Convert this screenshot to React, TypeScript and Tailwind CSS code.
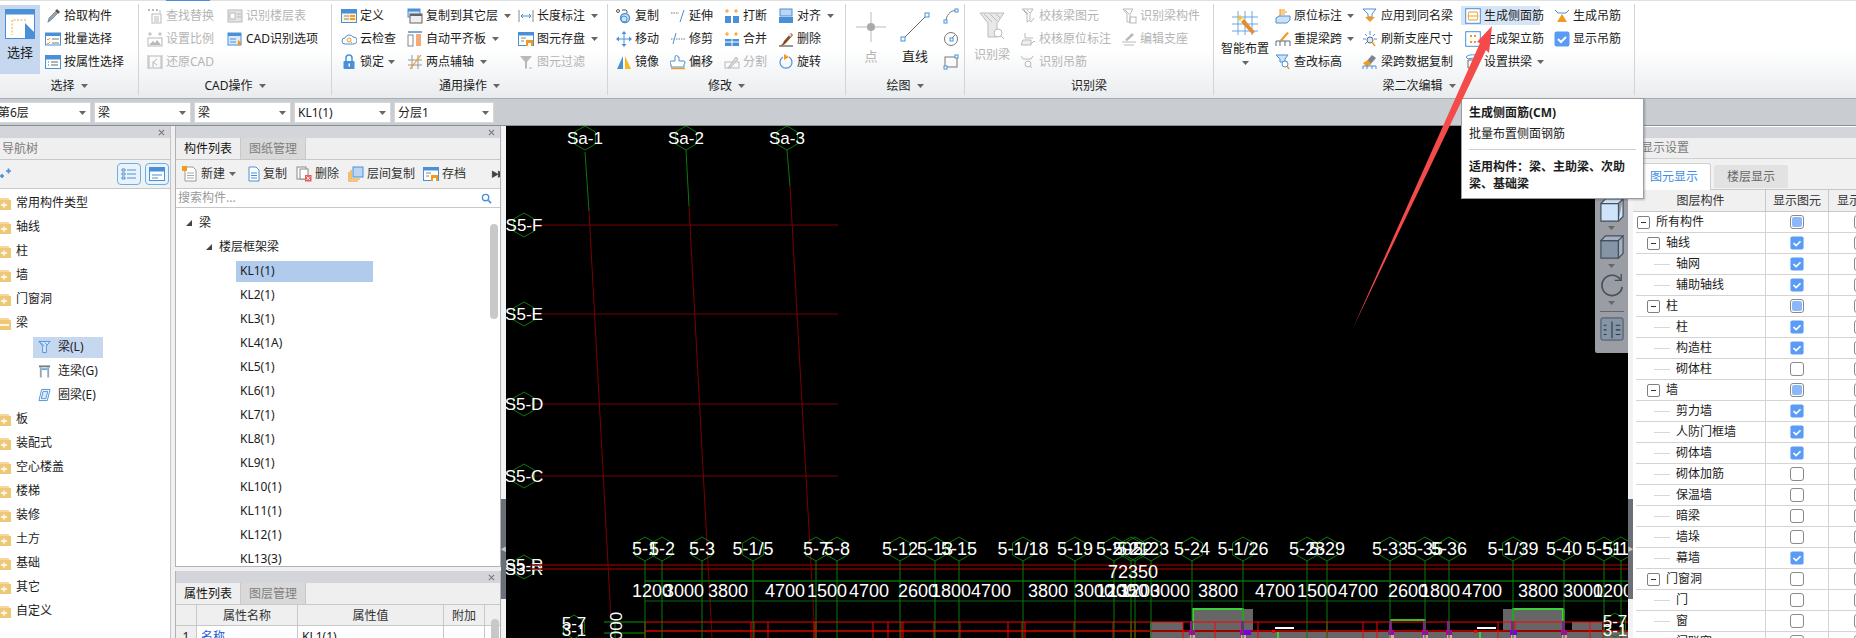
import React from "react";

const B = "#4a90d9";
const O = "#f39a1e";
const G = "#b9b9b9";
const K = "#5f6b78";

const icons: Record<string, React.ReactNode> = {
  pick: <><path d="M3 14l1-4 6-6 2 2-6 6z" fill="#9aa3ad" stroke="#666" strokeWidth=".6" /><path d="M10 3l2-2 3 3-2 2z" fill="#555" /><path d="M2 15l2-3 1 1z" fill={B} /></>,
  batch: <><rect x=".5" y="2" width="15" height="12" fill="#fff" stroke={B} /><rect x=".5" y="2" width="15" height="3" fill={B} /><path d="M2 8l1 1 2-2M2 12l1 1 2-2" stroke={O} fill="none" /><path d="M7 8h7M7 12h7" stroke="#777" /></>,
  attr: <><rect x=".5" y="1.5" width="15" height="13" fill="#fff" stroke={B} /><rect x=".5" y="1.5" width="15" height="4" fill={B} /><path d="M3 8h1M3 11h1M6 8h7M6 11h7" stroke="#666" /></>,
  find: <><path d="M1 2h2M5 2h2M9 2h2" stroke={G} strokeWidth="2" /><path d="M13 2v3" stroke={G} /><rect x="5" y="6" width="9" height="9" fill="none" stroke={G} /><path d="M7 9h5M7 11h5M7 13h5" stroke={G} /></>,
  scale: <><path d="M1 3h4M11 3h4M3 1v4M13 1v4" stroke={G} /><rect x="1" y="7" width="14" height="8" fill="none" stroke={G} /><path d="M2 14l4-4 2 2 2-3 4 5z" fill={G} /></>,
  restore: <><rect x="2" y="2" width="12" height="12" fill="none" stroke={G} /><path d="M10 5L6 8l4 3M6 8v5" stroke={G} fill="none" /><path d="M1 1v14M15 1v14" stroke={G} /></>,
  floor: <><rect x="1" y="2" width="14" height="12" fill="#e4e4e4" stroke={G} /><rect x="3" y="5" width="5" height="6" fill="#fff" stroke={G} /><path d="M10 6h4M10 9h4" stroke={G} /></>,
  cadopt: <><rect x="1" y="2" width="13" height="12" fill="#dbe9f8" stroke={B} /><rect x="1" y="2" width="13" height="3" fill={B} /><path d="M11 9l4 3-4 3z" fill={O} /><path d="M3 8h6M3 11h6" stroke={B} /></>,
  define: <><rect x=".5" y="1.5" width="15" height="13" fill="#fdf3dc" stroke={B} /><rect x=".5" y="1.5" width="15" height="4" fill={B} /><path d="M3 8h5M3 11h5" stroke="#888" /><rect x="9" y="7" width="5" height="2" fill={O} /><rect x="9" y="10" width="5" height="2" fill={O} /></>,
  cloud: <><path d="M4 13a3 3 0 010-6 4.500 4.500 0 018-1 3.500 3.500 0 011 7z" fill="#fff" stroke={B} /><circle cx="8" cy="9" r="2" fill="none" stroke={O} /><path d="M9.500 10.500l1.500 1.500" stroke={O} /></>,
  lock: <><rect x="2.500" y="7" width="11" height="8" rx="1" fill={B} /><path d="M5 7V4a3 3 0 016 0v3" fill="none" stroke={B} strokeWidth="1.500" /><rect x="7.500" y="9.500" width="1.500" height="3" fill="#fff" /></>,
  copyf: <><rect x="1" y="1" width="12" height="8" fill="#cfe1f5" stroke={B} /><rect x="1" y="1" width="12" height="2.500" fill={B} /><rect x="3" y="6" width="12" height="9" fill="#eee" stroke="#666" /><rect x="3" y="6" width="12" height="2" fill="#666" /></>,
  plate: <><path d="M1 1h14" stroke={B} strokeWidth="1.500" /><rect x="1" y="4" width="5" height="11" fill="#fff" stroke="#888" /><rect x="9" y="3" width="5" height="12" fill="#f6a878" /></>,
  twoaxis: <><path d="M5 1v14M11 1v14M1 6h14M1 11h14" stroke="#999" /><path d="M3 15L14 1" stroke={O} strokeWidth="1.200" /></>,
  dim: <><path d="M1 2v12M15 2v12" stroke="#888" /><path d="M3 8h10M3 8l2-2M3 8l2 2M13 8l-2-2M13 8l-2 2" stroke={B} fill="none" /></>,
  save: <><rect x=".5" y="1.500" width="15" height="13" fill="#fff" stroke={B} /><rect x=".5" y="1.500" width="15" height="3" fill={B} /><path d="M3 7h5M3 10h3" stroke="#888" /><rect x="8" y="9" width="7" height="6" fill={O} /><rect x="10" y="12" width="3" height="3" fill="#fff" /></>,
  filter: <><path d="M2 2h12L9 8v6l-2 1V8z" fill={G} /><path d="M11 14h3" stroke={G} /></>,
  copy: <><circle cx="2" cy="3" r="1.500" fill="none" stroke="#555" /><path d="M6 2h4l1 1v2" stroke="#555" fill="none" /><circle cx="9" cy="10" r="4.500" fill="#cfe1f5" stroke={B} strokeWidth="1.300" /><circle cx="8" cy="11" r="3" fill="none" stroke={B} /></>,
  move: <><path d="M8 1v14M1 8h14" stroke={B} /><path d="M8 0l2.500 3h-5zM8 16l2.500-3h-5zM0 8l3-2.500v5zM16 8l-3-2.500v5z" fill={B} /></>,
  mirror: <><path d="M7 2v13H1z" fill={B} /><path d="M9 2v13h6z" fill="#fbb917" /></>,
  extend: <><path d="M1 5h8" stroke="#777" strokeDasharray="1.500 1" /><path d="M10 14l4-12" stroke={B} /></>,
  trim: <><path d="M1 8h14" stroke="#777" strokeDasharray="1.500 1" /><path d="M3 13L6 2" stroke={B} /></>,
  offset: <><path d="M5 7V3a1.500 1.500 0 013 0h1v4h4a1.500 1.500 0 011 3v3H1v-3a1.500 1.500 0 011-3z" fill="#fff" stroke={B} /><path d="M1 14.500h14" stroke={O} strokeWidth="1.500" /></>,
  brk: <><path d="M3 1v4M1 3h4M12 1v4M10 3h4" stroke={O} /><rect x="1" y="8" width="6" height="7" fill={B} /><rect x="9" y="8" width="6" height="7" fill={B} /></>,
  merge: <><path d="M3 1v4M1 3h4M12 1v4M10 3h4" stroke={O} /><rect x="1" y="8" width="14" height="7" fill={B} /><path d="M8 8v7M1 11h14" stroke="#fff" /></>,
  split: <><rect x="1" y="8" width="14" height="6" fill="none" stroke={G} /><path d="M4 14l8-11 2 2-7 8z" fill="#ddd" stroke={G} /></>,
  align: <><rect x="2" y="1" width="12" height="7" fill="#bcd5f2" stroke={B} /><rect x="1" y="9" width="14" height="6" fill={B} /></>,
  del: <><path d="M1 14c3 1 4-2 5-4l7-8 2 2-7 8c-2 2-4 3-7 2z" fill="#8a4b20" /><path d="M10 4l2-2 2 2-2 2z" fill="#d9d9d9" /><path d="M1 15h14" stroke="#333" /></>,
  rotate: <><path d="M5 3a6 6 0 106 0" fill="none" stroke={B} strokeWidth="1.200" /><path d="M6 0l5 3-5 3z" fill={O} /></>,
  arc: <><path d="M3 14C3 7 7 3 13 2" fill="none" stroke="#777" /><rect x="1" y="12" width="3" height="3" fill="#fff" stroke={B} /><rect x="12" y="1" width="3" height="3" fill="#fff" stroke={B} /></>,
  circle: <><circle cx="8" cy="8" r="6.500" fill="none" stroke="#777" /><path d="M8 8l4-4" stroke="#777" /><rect x="7" y="7" width="3" height="3" fill="#fff" stroke={B} /></>,
  rect: <><rect x="2" y="3" width="12" height="10" fill="none" stroke="#777" /><rect x="1" y="12" width="3" height="3" fill="#fff" stroke={B} /><rect x="12" y="1" width="3" height="3" fill="#fff" stroke={B} /></>,
  chk: <><path d="M2 1h11l-3 5v6l-3 2V6z" fill="none" stroke={G} /><path d="M4 2l4 4M7 2l3 3" stroke={G} /><path d="M9 12l2 2 3-4" stroke={G} fill="none" /></>,
  chk2: <><path d="M1 14h10V9H3z" fill="#eee" stroke={G} /><path d="M5 2v5h8" stroke={G} fill="none" /><path d="M11 13l3-3 1 1" stroke={G} fill="none" /></>,
  hang: <><path d="M1 2l2 3h8l2-3" stroke={G} fill="none" /><circle cx="8" cy="10" r="3" fill="none" stroke={G} /><path d="M10 12l2 2" stroke={G} /></>,
  idc: <><path d="M2 1h10l-3 5v8H6V6z" fill="none" stroke={G} /><path d="M4 2l4 4" stroke={G} /><rect x="9" y="9" width="6" height="6" fill="none" stroke={G} /></>,
  editseat: <><path d="M1 11h14M3 14h10" stroke={G} /><path d="M4 9l7-7 2 2-7 6z" fill={G} /></>,
  orig: <><path d="M5 1v7M5 2h5M5 4h7M5 6h5" stroke={O} /><path d="M1 10l3-2h11v4l-3 3H1z" fill="#cfe1f5" stroke={B} /></>,
  span: <><path d="M5 9l7-8 2 1-7 8z" fill={O} /><path d="M1 10h14v5M1 10v5M5 10v5M10 10v5" stroke={K} fill="none" /></>,
  elev: <><path d="M1 1h12l-3 4v3H5V5z" fill="#cfe1f5" stroke={B} /><circle cx="10" cy="10" r="3" fill="#fff" stroke={B} /><path d="M12 12l2 3" stroke={O} strokeWidth="1.500" /></>,
  apply: <><path d="M1 1h13l-4 5v3H6V6z" fill="none" stroke={B} /><path d="M3 9h10l-5 5z" fill={O} /></>,
  refresh: <><path d="M8 0v4M3 3l2 2M13 3l-2 2M1 8h3M12 8h3M3 13l2-2" stroke={B} /><circle cx="8" cy="9" r="3" fill="#dbe9f8" stroke={K} /><path d="M10 11l3 4" stroke={O} strokeWidth="1.500" /></>,
  spancopy: <><path d="M4 8l6-7 4 3-6 7z" fill="#7a8591" /><path d="M1 9l5-3 3 4-4 3z" fill={O} /><path d="M1 15v-3h13v3M5 12v3M10 12v3" stroke={B} fill="none" /></>,
  side: <><rect x=".7" y=".7" width="14.600" height="14.600" fill="#fff" stroke={B} /><path d="M4 4h8M4 12h8M4 4c-1 2-1 6 0 8M12 4c1 2 1 6 0 8M4 8h8" stroke={O} fill="none" /></>,
  rack: <><rect x=".7" y=".7" width="14.600" height="14.600" fill="#fff" stroke={B} /><path d="M5 4h2v2H5zM9 4h2v2H9zM5 10h2v2H5zM9 10h2v2H9z" fill={O} /></>,
  arch: <><path d="M1 3c3-3 10-3 13 0l-2 2c-2-1-7-1-9 0z" fill="none" stroke={B} /><path d="M3 6h8v8H3z" fill="#fff" stroke={K} /><path d="M9 9l4 3-3 3z" fill={O} /></>,
  hanger: <><path d="M1 2l3 3h8l3-3" stroke={B} fill="none" /><path d="M8 6l5 8H3z" fill={O} /></>,
  checked: <><rect x=".5" y=".5" width="15" height="15" rx="2" fill="#5a9cf5" /><path d="M4 8l3 3 5-5" stroke="#fff" strokeWidth="2" fill="none" /></>,
  new: <><path d="M3 1h8l3 3v11H3z" fill="#fff" stroke="#999" /><path d="M5 7h7M5 9.500h7M5 12h7" stroke="#aaa" /><rect x="0" y="0" width="5" height="5" fill={O} /></>,
  tcopy: <><path d="M3 1h7l3 3v11H3z" fill="#fff" stroke={B} /><path d="M5 7h6M5 9.500h6M5 12h6" stroke={B} /></>,
  tdel: <><rect x="1" y="1" width="9" height="12" fill="#fff" stroke="#888" /><rect x="4" y="3" width="8" height="10" fill="#fff" stroke="#888" /><rect x="9" y="9" width="6.500" height="6.500" fill="#e35d5d" /><path d="M10.500 10.500l3.500 3.500M14 10.500L10.500 14" stroke="#fff" /></>,
  layer: <><path d="M1 6v9h9" fill="none" stroke={O} strokeWidth="1.200" /><path d="M3 4v9h9" fill="none" stroke={O} strokeWidth="1.200" /><rect x="5" y="1" width="10" height="10" fill="#bcd5f2" stroke={B} /></>,
};

const Ic = ({ n, c = "w-[16px] h-[16px]" }: { n: string; c?: string }) => (
  <svg viewBox="0 0 16 16" className={`${c} shrink-0`}>{icons[n]}</svg>
);

const Caret = () => (
  <svg viewBox="0 0 7 4" className="w-[7px] h-[4px] shrink-0"><path d="M0 0h7L3.500 4z" fill="#666" /></svg>
);

type BtnP = { i: string; t: string; off?: boolean; car?: string; hi?: boolean };
const Btn = ({ i, t, off, car, hi }: BtnP) => (
  <div className={`h-[23px] flex items-center whitespace-nowrap ${off ? "text-[#b4b4b4]" : "text-[#1c1c1c]"} ${hi ? "bg-[#d6e5f6] -ml-[4px] pl-[4px] mr-[14px] my-[2px] !h-[19px]" : ""}`}>
    <Ic n={i} />
    <span className="ml-[3px]">{t}</span>
    {car ? <span className={`flex ${car}`}><Caret /></span> : null}
  </div>
);

const Col = ({ w, items }: { w: string; items: BtnP[] }) => (
  <div className={`${w} shrink-0 flex flex-col`}>{items.map((x) => <Btn key={x.t} {...x} />)}</div>
);

const Group = ({ w, label, noCaret, lw, children }: { w: string; label: string; noCaret?: boolean; lw?: string; children: React.ReactNode }) => (
  <section className={`${w} shrink-0 flex flex-col border-r border-[#d2d4d7]`}>
    <div className="h-[69px] flex">{children}</div>
    <div className={`mt-[6px] h-[14px] flex items-center justify-center gap-[6px] leading-[14px] text-[#1c1c1c] ${lw ?? ""}`}>
      <span>{label}</span>
      {noCaret ? null : <Caret />}
    </div>
  </section>
);

const Ribbon = () => (
  <div className="relative h-[99px] flex py-[3px] border-t border-[#dfe0e2] border-b border-b-[#a9acb1] bg-gradient-to-b from-white via-white to-[#e9ecee]">
    <span className="absolute left-[166px] -top-[1px] w-[44px] h-[1px] bg-[#4a90d9]" />
    <Group w="w-[139px]" label="选择">
      <div className="w-[40px] h-[69px] mt-[1px] bg-[#c6d8f0] flex flex-col items-center shrink-0">
        <svg viewBox="0 0 30 30" className="w-[30px] h-[30px] mt-[4px]">
          <rect x=".5" y=".5" width="29" height="29" fill="#fff" stroke="#4a90d9" />
          <rect x=".5" y=".5" width="29" height="5" fill="#4a90d9" />
          <path d="M21 11H7v15" fill="none" stroke="#f5a623" strokeDasharray="2 1.500" />
          <path d="M20 14l9 9v6h-9z" fill="#4a90d9" />
        </svg>
        <span className="mt-[5px] text-[13px] leading-[16px] text-[#1c1c1c]">选择</span>
      </div>
      <div className="ml-[5px]">
        <Col w="w-[90px]" items={[{ i: "pick", t: "拾取构件" }, { i: "batch", t: "批量选择" }, { i: "attr", t: "按属性选择" }]} />
      </div>
    </Group>
    <Group w="w-[193px]" label="CAD操作">
      <div className="w-[8px]" />
      <Col w="w-[80px]" items={[{ i: "find", t: "查找替换", off: true }, { i: "scale", t: "设置比例", off: true }, { i: "restore", t: "还原CAD", off: true }]} />
      <Col w="w-[100px]" items={[{ i: "floor", t: "识别楼层表", off: true }, { i: "cadopt", t: "CAD识别选项" }]} />
    </Group>
    <Group w="w-[276px]" label="通用操作">
      <div className="w-[9px]" />
      <Col w="w-[66px]" items={[{ i: "define", t: "定义" }, { i: "cloud", t: "云检查" }, { i: "lock", t: "锁定", car: "ml-[4px]" }]} />
      <Col w="w-[111px]" items={[{ i: "copyf", t: "复制到其它层", car: "ml-[6px]" }, { i: "plate", t: "自动平齐板", car: "ml-[6px]" }, { i: "twoaxis", t: "两点辅轴", car: "ml-[6px]" }]} />
      <Col w="w-[88px]" items={[{ i: "dim", t: "长度标注", car: "ml-[6px]" }, { i: "save", t: "图元存盘", car: "ml-[6px]" }, { i: "filter", t: "图元过滤", off: true }]} />
    </Group>
    <Group w="w-[238px]" label="修改">
      <div className="w-[8px]" />
      <Col w="w-[54px]" items={[{ i: "copy", t: "复制" }, { i: "move", t: "移动" }, { i: "mirror", t: "镜像" }]} />
      <Col w="w-[54px]" items={[{ i: "extend", t: "延伸" }, { i: "trim", t: "修剪" }, { i: "offset", t: "偏移" }]} />
      <Col w="w-[54px]" items={[{ i: "brk", t: "打断" }, { i: "merge", t: "合并" }, { i: "split", t: "分割", off: true }]} />
      <Col w="w-[66px]" items={[{ i: "align", t: "对齐", car: "ml-[6px]" }, { i: "del", t: "删除" }, { i: "rotate", t: "旋转" }]} />
    </Group>
    <Group w="w-[119px]" label="绘图">
      <div className="w-[44px] ml-[3px] flex flex-col items-center text-[13px] text-[#b4b4b4]">
        <svg viewBox="0 0 30 30" className="w-[30px] h-[30px] mt-[8px]"><path d="M15 0v30M0 15h30" stroke="#bbb" /><circle cx="15" cy="15" r="4" fill="#aaa" /></svg>
        <span className="mt-[6px] leading-[16px]">点</span>
      </div>
      <div className="w-[44px] flex flex-col items-center text-[13px] text-[#1c1c1c]">
        <svg viewBox="0 0 30 30" className="w-[30px] h-[30px] mt-[8px]"><path d="M3 27L27 3" stroke="#666" /><rect x="1" y="25" width="4" height="4" fill="#fff" stroke="#4a90d9" /><rect x="25" y="1" width="4" height="4" fill="#fff" stroke="#4a90d9" /></svg>
        <span className="mt-[6px] leading-[16px]">直线</span>
      </div>
      <div className="flex flex-col ml-[6px]">
        <div className="h-[23px] flex items-center"><Ic n="arc" /></div>
        <div className="h-[23px] flex items-center"><Ic n="circle" /></div>
        <div className="h-[23px] flex items-center"><Ic n="rect" /></div>
      </div>
    </Group>
    <Group w="w-[249px]" label="识别梁" noCaret>
      <div className="w-[46px] ml-[4px] flex flex-col items-center text-[#b4b4b4]">
        <svg viewBox="0 0 30 30" className="w-[30px] h-[30px] mt-[7px]"><path d="M3 2h24l-7 10v14H11V12z" fill="#e8e8e8" stroke="#bbb" /><path d="M7 3l8 8M13 3l7 7M19 3l4 4" stroke="#bbb" /><circle cx="21" cy="22" r="4" fill="#fff" stroke="#bbb" /><path d="M24 25l3 3" stroke="#bbb" /></svg>
        <span className="mt-[6px] leading-[16px]">识别梁</span>
      </div>
      <div className="w-[5px]" />
      <Col w="w-[101px]" items={[{ i: "chk", t: "校核梁图元", off: true }, { i: "chk2", t: "校核原位标注", off: true }, { i: "hang", t: "识别吊筋", off: true }]} />
      <Col w="w-[90px]" items={[{ i: "idc", t: "识别梁构件", off: true }, { i: "editseat", t: "编辑支座", off: true }]} />
    </Group>
    <Group w="w-[421px]" label="梁二次编辑" lw="-ml-[10px]">
      <div className="w-[60px] ml-[1px] flex flex-col items-center">
        <svg viewBox="0 0 30 30" className="w-[30px] h-[30px] mt-[5px]"><path d="M8 2v24M15 2v24M22 2v24M2 8h26M2 15h26M2 22h26" stroke="#6ba6e3" /><path d="M11 13l11 12 3-2L14 10z" fill="#e68a2e" /><path d="M9 8l1-3 1 3 3 1-3 1-1 3-1-3-3-1z" fill="#f5c518" /></svg>
        <span className="mt-[2px] leading-[16px] text-[#1c1c1c]">智能布置</span>
        <span className="mt-[4px] flex"><Caret /></span>
      </div>
      <Col w="w-[87px]" items={[{ i: "orig", t: "原位标注", car: "ml-[5px]" }, { i: "span", t: "重提梁跨", car: "ml-[5px]" }, { i: "elev", t: "查改标高" }]} />
      <Col w="w-[103px]" items={[{ i: "apply", t: "应用到同名梁" }, { i: "refresh", t: "刷新支座尺寸" }, { i: "spancopy", t: "梁跨数据复制" }]} />
      <Col w="w-[89px]" items={[{ i: "side", t: "生成侧面筋", hi: true }, { i: "rack", t: "生成架立筋" }, { i: "arch", t: "设置拱梁", car: "ml-[5px]" }]} />
      <Col w="w-[75px]" items={[{ i: "hanger", t: "生成吊筋" }, { i: "checked", t: "显示吊筋" }]} />
    </Group>
  </div>
);

const Combo = ({ w, t, first }: { w: string; t: string; first?: boolean }) => (
  <div className={`${w} h-[21px] bg-white border border-[#d6d8db] flex items-center justify-between ${first ? "pl-0 -ml-[3px] pr-[4px]" : "px-[3px] pr-[4px]"}`}>
    <span className="text-[#1c1c1c]">{t}</span>
    <Caret />
  </div>
);

const ComboBar = () => (
  <div className="h-[27px] bg-[#c9ccd1] flex items-start pt-[3px] gap-[3px] border-b border-[#8b8e93] overflow-hidden">
    <Combo w="w-[94px]" t="第6层" first />
    <Combo w="w-[97px]" t="梁" />
    <Combo w="w-[97px]" t="梁" />
    <Combo w="w-[97px]" t="KL1(1)" />
    <Combo w="w-[100px]" t="分层1" />
  </div>
);

const X = () => (
  <svg viewBox="0 0 8 8" className="w-[7px] h-[7px]"><path d="M1 1l6 6M7 1L1 7" stroke="#777" strokeWidth="1.200" /></svg>
);

const DockHead = () => (
  <div className="h-[12px] bg-[#d3d5da] flex items-center justify-end pr-[5px]"><X /></div>
);

const Folder = ({ open }: { open?: boolean }) => (
  <svg viewBox="0 0 11 13" className="w-[11px] h-[13px] shrink-0">
    <path d="M0 1h9v2H0z" fill="#f3d79f" />
    <path d="M0 3h11v10H0z" fill="#eec877" />
    {open ? <path d="M0 7h9v2H0z" fill="#fff7e6" /> : <path d="M4 5.500v5M1 8h6" stroke="#fff" strokeWidth="1.500" />}
  </svg>
);

const navTop = ["常用构件类型", "轴线", "柱", "墙", "门窗洞"];
const navBottom = ["板", "装配式", "空心楼盖", "楼梯", "装修", "土方", "基础", "其它", "自定义"];

const NavRow = ({ t, open }: { t: string; open?: boolean }) => (
  <div className="h-[24px] flex items-center">
    <Folder open={open} />
    <span className="ml-[5px]">{t}</span>
  </div>
);

const NavChild = ({ t, sel, children }: { t: string; sel?: boolean; children: React.ReactNode }) => (
  <div className="h-[24px] flex items-center pl-[33px]">
    <div className={`flex items-center h-[21px] w-[70px] pl-[5px] ${sel ? "bg-[#c6d8f0]" : ""}`}>
      {children}
      <span className="ml-[7px] whitespace-nowrap">{t}</span>
    </div>
  </div>
);

const NavPanel = () => (
  <div className="w-[171px] shrink-0 bg-white border-r border-[#c4c6c9] overflow-hidden">
    <DockHead />
    <div className="h-[22px] bg-[#efefef] border-b border-[#c8c8c8] flex items-center pl-[2px] text-[#7b7b7b]">导航树</div>
    <div className="h-[29px] bg-[#f1f1f1] border-b border-[#c8c8c8] flex items-center justify-between pr-[1px]">
      <svg viewBox="0 0 12 12" className="w-[12px] h-[12px]"><path d="M0 8h4M2 6v4M6 3h5M8.500 0.500v5" stroke="#4a90d9" strokeWidth="1.700" /></svg>
      <div className="flex gap-[4px]">
        <div className="w-[24px] h-[22px] bg-[#eaf3fb] border border-[#6ab0e8] rounded-[4px] flex items-center justify-center">
          <svg viewBox="0 0 16 14" className="w-[16px] h-[14px]"><path d="M1 2h3v2H1zM1 6h3v2H1zM1 10h3v2H1z" fill="none" stroke="#4a90d9" /><path d="M6 3h9M6 7h9M6 11h9" stroke="#4a90d9" /></svg>
        </div>
        <div className="w-[24px] h-[22px] bg-[#eaf3fb] border border-[#6ab0e8] rounded-[4px] flex items-center justify-center">
          <svg viewBox="0 0 16 14" className="w-[16px] h-[14px]"><rect x=".5" y=".5" width="15" height="13" fill="#fff" stroke="#4a90d9" /><rect x=".5" y=".5" width="15" height="4" fill="#4a90d9" /><path d="M3 8h10M3 11h6" stroke="#4a90d9" /></svg>
        </div>
      </div>
    </div>
    <div className="pt-[2px] text-[#1c1c1c]">
      {navTop.map((t) => <NavRow key={t} t={t} />)}
      <NavRow t="梁" open />
      <NavChild t="梁(L)" sel>
        <svg viewBox="0 0 14 14" className="w-[13px] h-[14px]"><path d="M1 1h12l-4 5v7H5V6z" fill="#dbe9f8" stroke="#4a90d9" /><path d="M3 2l4 4M7 2l3 3" stroke="#4a90d9" /></svg>
      </NavChild>
      <NavChild t="连梁(G)">
        <svg viewBox="0 0 14 14" className="w-[13px] h-[14px]"><path d="M1 1h12v2H1z" fill="#6f7d8c" /><path d="M2 3h2v11H2zM10 3h2v11h-2z" fill="#9aa6b2" /><path d="M4 4h6v2H4z" fill="#6ba6e3" /></svg>
      </NavChild>
      <NavChild t="圈梁(E)">
        <svg viewBox="0 0 14 14" className="w-[13px] h-[14px]"><path d="M4 1h9l-3 12H1z" fill="#fff" stroke="#4a90d9" /><path d="M5.500 3h5l-2 8h-5z" fill="#dbe9f8" stroke="#4a90d9" /></svg>
      </NavChild>
      {navBottom.map((t) => <NavRow key={t} t={t} />)}
    </div>
  </div>
);

const Tab = ({ t, on }: { t: string; on?: boolean }) => (
  <div className={`w-[65px] flex items-center justify-center border-r border-[#c8c8c8] ${on ? "bg-[#efefef] text-[#111]" : "bg-[#d9d9d9] text-[#808080]"}`}>{t}</div>
);

const kls = ["KL1(1)", "KL2(1)", "KL3(1)", "KL4(1A)", "KL5(1)", "KL6(1)", "KL7(1)", "KL8(1)", "KL9(1)", "KL10(1)", "KL11(1)", "KL12(1)", "KL13(3)"];

const Tri = () => (
  <svg viewBox="0 0 6 6" className="w-[6px] h-[6px]"><path d="M6 0v6H0z" fill="#444" /></svg>
);

const Tool = ({ i, t, w, car, tight }: { i: string; t: string; w: string; car?: boolean; tight?: boolean }) => (
  <div className={`${w} flex items-center shrink-0`}>
    <Ic n={i} />
    <span className={tight ? "ml-[1px]" : "ml-[3px]"}>{t}</span>
    {car ? <span className="ml-[4px] flex"><Caret /></span> : null}
  </div>
);

const ListPanel = () => (
  <div className="w-[326px] shrink-0 flex flex-col text-[#1c1c1c]">
    <div className="h-[441px] bg-white border-x border-b border-[#b0b2b5] flex flex-col overflow-hidden">
      <DockHead />
      <div className="h-[22px] shrink-0 bg-[#efefef] border-b border-[#c8c8c8] flex">
        <Tab t="构件列表" on /><Tab t="图纸管理" />
      </div>
      <div className="h-[29px] shrink-0 bg-[#f1f1f1] border-b border-[#c8c8c8] flex items-center pl-[6px] text-[#333]">
        <Tool i="new" t="新建" w="w-[64px]" car />
        <Tool i="tcopy" t="复制" w="w-[50px]" tight />
        <Tool i="tdel" t="删除" w="w-[52px]" />
        <Tool i="layer" t="层间复制" w="w-[75px]" />
        <Tool i="save" t="存档" w="w-[68px]" />
        <span className="text-[8px] tracking-[-2px] text-[#444]">▶▶</span>
      </div>
      <div className="h-[19px] shrink-0 border-b border-[#c8c8c8] flex items-center justify-between pl-[2px] pr-[8px] text-[#9a9a9a]">
        <span>搜索构件...</span>
        <svg viewBox="0 0 12 12" className="w-[11px] h-[11px]"><circle cx="5" cy="5" r="3.500" fill="none" stroke="#4a90d9" strokeWidth="1.500" /><path d="M8 8l3 3" stroke="#4a90d9" strokeWidth="1.700" /></svg>
      </div>
      <div className="relative flex-1 overflow-hidden">
        <div className="absolute right-[2px] top-[16px] w-[8px] h-[95px] rounded-[4px] bg-[#c8c8c8]" />
        <div className="pt-[3px]">
          <div className="h-[24px] flex items-center pl-[10px]"><Tri /><span className="ml-[7px]">梁</span></div>
          <div className="h-[24px] flex items-center pl-[30px]"><Tri /><span className="ml-[7px]">楼层框架梁</span></div>
          {kls.map((k, i) => (
            <div key={k} className="h-[24px] flex items-center pl-[60px]">
              <div className={`h-[21px] w-[137px] flex items-center pl-[4px] ${i === 0 ? "bg-[#b0cbec]" : ""}`}>{k}</div>
            </div>
          ))}
        </div>
      </div>
    </div>
    <div className="mt-[4px] flex-1 border-x border-[#b0b2b5] bg-white overflow-hidden">
      <DockHead />
      <div className="h-[22px] bg-[#efefef] border-b border-[#c8c8c8] flex">
        <Tab t="属性列表" on /><Tab t="图层管理" />
      </div>
      <div className="relative">
        <div className="absolute right-[1px] top-[14px] w-[8px] h-[40px] rounded-[4px] bg-[#c8c8c8]" />
        <div className="grid grid-cols-[21px_101px_146px_41px] border-b border-[#c8c8c8] h-[21px] bg-[#efefef] text-[#333]">
          <div className="border-r border-[#c8c8c8]" />
          <div className="border-r border-[#c8c8c8] text-center leading-[21px]">属性名称</div>
          <div className="border-r border-[#c8c8c8] text-center leading-[21px]">属性值</div>
          <div className="border-r border-[#c8c8c8] text-center leading-[21px]">附加</div>
        </div>
        <div className="grid grid-cols-[21px_101px_146px_41px] h-[21px]">
          <div className="border-r border-[#c8c8c8] bg-[#efefef] text-center leading-[21px]">1</div>
          <div className="border-r border-[#c8c8c8] pl-[4px] leading-[21px] text-[#1a5fe0]">名称</div>
          <div className="border-r border-[#c8c8c8] pl-[4px] leading-[21px]">KL1(1)</div>
          <div className="border-r border-[#c8c8c8]" />
        </div>
      </div>
    </div>
  </div>
);

const hexPts = (cx: number, cy: number, r = 12) =>
  [0, 1, 2, 3, 4, 5].map((i) => {
    const a = (Math.PI / 3) * i - Math.PI / 2;
    return `${(cx + r * Math.cos(a)).toFixed(1)},${(cy + r * Math.sin(a)).toFixed(1)}`;
  }).join(" ");

const axes: [string, number][] = [
  ["5-1", 645], ["5-2", 662], ["5-3", 702], ["5-1/5", 753], ["5-7", 816], ["5-8", 837], ["5-12", 900], ["5-13", 935], ["5-15", 959],
  ["5-1/18", 1023], ["5-19", 1075], ["5-20", 1114], ["5-21", 1131], ["5-22", 1135], ["5-23", 1151], ["5-24", 1192], ["5-1/26", 1243],
  ["5-28", 1307], ["5-29", 1327], ["5-33", 1390], ["5-35", 1425], ["5-36", 1449], ["5-1/39", 1513], ["5-40", 1564], ["5-51", 1604], ["5-14", 1621],
];
const dims: [string, number][] = [
  ["1200", 652], ["3000", 684], ["3800", 728], ["4700", 785], ["1500", 827], ["4700", 869], ["2600", 918], ["1800", 951], ["4700", 991],
  ["3800", 1048], ["3000", 1094], ["1200", 1116], ["1350", 1128], ["1200", 1140], ["3000", 1170], ["3800", 1218], ["4700", 1275], ["1500", 1317],
  ["4700", 1358], ["2600", 1408], ["1800", 1440], ["4700", 1482], ["3800", 1538], ["3000", 1583], ["1200", 1613],
];
const reds = [645, 751, 754, 768, 814, 816, 873, 888, 901, 903, 934, 960, 1008, 1022, 1025, 1074, 1113, 1131, 1135, 1183, 1215, 1258, 1327, 1363, 1377, 1390, 1425, 1449, 1498, 1515, 1590, 1603, 1622];
const dark = "#7a0000";

const Canvas = () => (
  <div className="relative w-[1122px] shrink-0 bg-black overflow-hidden">
    <svg viewBox="506 126 1122 512" className="w-[1122px] h-[512px] font-['Liberation_Sans',sans-serif]">
      {[225, 314, 404, 476].map((y) => <line key={y} x1="530" x2="838" y1={y} y2={y} stroke={dark} />)}
      {[[585, 152, 589, 211, 612, 638], [686, 150, 689, 206, 712, 638], [787, 150, 790, 186, 815, 638]].map((p, i) => (
        <g key={i}>
          <line x1={p[0]} y1={p[1]} x2={p[2]} y2={p[3]} stroke="#0a7a0a" />
          <line x1={p[2]} y1={p[3]} x2={p[4]} y2={p[5]} stroke={dark} />
        </g>
      ))}
      {[["Sa-1", 585], ["Sa-2", 686], ["Sa-3", 787]].map(([t, x]) => (
        <g key={t as string}>
          <polygon points={hexPts(x as number, 138)} fill="none" stroke="#0a7a0a" />
          <text x={x as number} y="144" textAnchor="middle" fontSize="17" fill="#fff">{t}</text>
        </g>
      ))}
      {[["S5-F", 225], ["S5-E", 314], ["S5-D", 404], ["S5-C", 476]].map(([t, y]) => (
        <g key={t as string}>
          <polygon points={hexPts(524, y as number)} fill="none" stroke="#0a7a0a" />
          <text x="524" y={(y as number) + 6} textAnchor="middle" fontSize="17" fill="#fff">{t}</text>
        </g>
      ))}
      <polygon points={hexPts(524, 567)} fill="none" stroke="#0a7a0a" />
      <text x="524" y="571" textAnchor="middle" fontSize="17" fill="#fff">S5-R</text>
      <text x="524" y="575" textAnchor="middle" fontSize="17" fill="#fff">S3-R</text>
      <line x1="530" x2="1628" y1="565" y2="565" stroke={dark} strokeWidth="1.500" />
      <line x1="530" x2="1628" y1="569" y2="569" stroke={dark} strokeWidth="1.500" />
      <line x1="645" x2="1628" y1="581" y2="581" stroke="#0a6a0a" strokeWidth="1.500" />
      <line x1="645" x2="1628" y1="601" y2="601" stroke="#0a6a0a" />
      <g>
        <rect x="1150" y="622" width="33" height="8" fill="#666" />
        <rect x="1193" y="609" width="60" height="21" fill="#666" />
        <rect x="1503" y="609" width="62" height="21" fill="#666" />
        <rect x="1572" y="622" width="30" height="8" fill="#666" />
        <rect x="1150" y="631" width="478" height="7" fill="#666" />
        <line x1="1150" x2="1628" y1="631" y2="631" stroke="#8a8a1e" strokeWidth="1.500" />
        <path d="M1193 630v-21h50v21M1513 630v-21h50v21" fill="none" stroke="#3ad13a" strokeWidth="2" />
      </g>
      <line x1="604" x2="645" y1="622" y2="622" stroke="#0a9a0a" />
      <line x1="604" x2="645" y1="633" y2="633" stroke="#0a9a0a" />
      <line x1="645" x2="1628" y1="622" y2="622" stroke="#ff0000" />
      <line x1="645" x2="1628" y1="631" y2="631" stroke="#a00000" strokeWidth="2" />
      {reds.map((x) => <line key={x} x1={x} x2={x} y1="622" y2="638" stroke="#ff0000" />)}
      <path d="M1391 630v-10h34v10" fill="none" stroke="#2fbf2f" strokeWidth="2" />
      {[1192, 1243, 1391, 1425, 1449, 1513, 1564].map((x) => (
        <g key={x}>
          <rect x={x - 2} y="621" width="3" height="9" fill="#b000b0" />
          <rect x={x - 2} y="630" width="5" height="8" fill="#e9a0b0" />
          <rect x={x - 3} y="630" width="6" height="5" fill="#b000b0" />
        </g>
      ))}
      <rect x="1243" y="630" width="8" height="5" fill="#7a00e0" />
      <rect x="1510" y="630" width="7" height="5" fill="#7a00e0" />
      {[1283, 1485].map((x) => (
        <g key={x}>
          <rect x={x - 8} y="627" width="19" height="2" fill="#fff" />
          <rect x={x - 11} y="630" width="3" height="3" fill="#f00" />
          <rect x={x - 6} y="632" width="2" height="6" fill="#3ad13a" />
        </g>
      ))}
      {axes.map(([t, x]) => (
        <g key={t}>
          <line x1={x} x2={x} y1="561" y2="638" stroke="#0a7a0a" />
          <polygon points={hexPts(x, 549)} fill="none" stroke="#0a7a0a" />
          <text x={x} y="555" textAnchor="middle" fontSize="18" fill="#fff">{t}</text>
        </g>
      ))}
      <text x="1133" y="578" textAnchor="middle" fontSize="18" fill="#fff">72350</text>
      {dims.map(([t, x], i) => <text key={i} x={x} y="597" textAnchor="middle" fontSize="18" fill="#fff">{t}</text>)}
      <polygon points={hexPts(574, 627)} fill="none" stroke="#0a7a0a" />
      <text x="574" y="629" textAnchor="middle" fontSize="17" fill="#fff">5-7</text>
      <text x="574" y="636" textAnchor="middle" fontSize="17" fill="#fff">3-1</text>
      <line x1="615" x2="615" y1="621" y2="638" stroke="#0a7a0a" />
      <text transform="rotate(-90 616 626)" x="616" y="632" textAnchor="middle" fontSize="17" fill="#fff">000</text>
      <polygon points={hexPts(1615, 625)} fill="none" stroke="#0a7a0a" />
      <text x="1615" y="627" textAnchor="middle" fontSize="17" fill="#fff">5-7</text>
      <text x="1615" y="636" textAnchor="middle" fontSize="17" fill="#fff">3-1</text>
    </svg>
    <div className="absolute right-0 top-0 w-[33px] h-[227px] bg-[#9a9da3] rounded-bl-[2px] flex flex-col items-center justify-end pb-[12px]">
      <svg viewBox="0 0 26 26" className="w-[24px] h-[24px]"><path d="M1 6h19v19H1zM1 6l5-5h19l-5 5M20 25l5-5V1" fill="#cfe3fb" stroke="#44505c" strokeWidth="1.300" /></svg>
      <span className="mt-[4px] flex"><Caret /></span>
      <svg viewBox="0 0 26 26" className="w-[24px] h-[24px] mt-[5px]"><path d="M1 6h19v19H1z" fill="#8595a8" stroke="#44505c" strokeWidth="1.300" /><path d="M1 6l5-5h19l-5 5zM20 25l5-5V1l-5 5z" fill="#a5b1c0" stroke="#44505c" strokeWidth="1.300" /></svg>
      <span className="mt-[5px] flex"><Caret /></span>
      <svg viewBox="0 0 26 26" className="w-[24px] h-[24px] mt-[5px]"><path d="M22 7a11 11 0 10 2 8" fill="none" stroke="#44505c" strokeWidth="1.800" /><path d="M23 1v7h-7" fill="none" stroke="#44505c" strokeWidth="1.500" /></svg>
      <span className="mt-[4px] flex"><Caret /></span>
      <div className="w-[24px] h-[1px] bg-[#5f6770] mt-[6px]" />
      <svg viewBox="0 0 26 26" className="w-[24px] h-[24px] mt-[5px]"><rect x="1" y="1" width="24" height="24" rx="2" fill="#8595a8" stroke="#44505c" /><path d="M13 5v18M4 9h3M4 14h3M4 19h3M17 9h5M17 14h5M17 19h5" stroke="#2e3740" strokeWidth="1.200" /></svg>
    </div>
  </div>
);

type R = { t: string; l: 0 | 1 | 2; s: "p" | "c" | "e" };
const rows: R[] = [
  { t: "所有构件", l: 0, s: "p" }, { t: "轴线", l: 1, s: "c" }, { t: "轴网", l: 2, s: "c" }, { t: "辅助轴线", l: 2, s: "c" },
  { t: "柱", l: 1, s: "p" }, { t: "柱", l: 2, s: "c" }, { t: "构造柱", l: 2, s: "c" }, { t: "砌体柱", l: 2, s: "e" },
  { t: "墙", l: 1, s: "p" }, { t: "剪力墙", l: 2, s: "c" }, { t: "人防门框墙", l: 2, s: "c" }, { t: "砌体墙", l: 2, s: "c" },
  { t: "砌体加筋", l: 2, s: "e" }, { t: "保温墙", l: 2, s: "e" }, { t: "暗梁", l: 2, s: "e" }, { t: "墙垛", l: 2, s: "e" }, { t: "幕墙", l: 2, s: "c" },
  { t: "门窗洞", l: 1, s: "e" }, { t: "门", l: 2, s: "e" }, { t: "窗", l: 2, s: "e" }, { t: "门联窗", l: 2, s: "e" },
];

const Box = ({ s }: { s: R["s"] }) => {
  if (s === "c") return <Ic n="checked" c="w-[14px] h-[14px]" />;
  return (
    <span className="w-[14px] h-[14px] rounded-[3px] border border-[#8a8a8a] bg-white flex items-center justify-center">
      {s === "p" ? <span className="w-[10px] h-[10px] rounded-[2px] bg-[#8ab8f8]" /> : null}
    </span>
  );
};

const Minus = () => (
  <span className="w-[13px] h-[13px] border border-[#808080] rounded-[2px] bg-white flex items-center justify-center shrink-0">
    <span className="w-[5px] h-[1px] bg-[#333]" />
  </span>
);

const RightPanel = () => (
  <div className="flex-1 min-w-0 overflow-hidden text-[#1c1c1c] bg-white">
    <div className="h-[11px] mt-[1px] bg-[#d3d5da]" />
    <div className="h-[21px] bg-[#efefef] border-b border-[#d0d0d0] flex items-center pl-[8px] text-[#7b7b7b]">显示设置</div>
    <div className="h-[31px] bg-[#f1f1f1] flex items-end pl-[4px] border-b border-[#c8c8c8]">
      <div className="w-[74px] h-[27px] bg-white rounded-t-[3px] border-x border-t border-[#d0d0d0] -mb-[1px] flex items-center justify-center text-[#3a8ee6]">图元显示</div>
      <div className="w-[74px] h-[23px] ml-[3px] mb-[1px] bg-[#e2e2e2] rounded-t-[3px] flex items-center justify-center text-[#666]">楼层显示</div>
    </div>
    <div className="grid grid-cols-[130px_63px_1fr] h-[22px] pl-[3px] bg-[#f0f0f0] border-b border-[#c8c8c8] text-[#333] leading-[21px]">
      <div className="text-center border-r border-[#c8c8c8]">图层构件</div>
      <div className="text-center border-r border-[#c8c8c8]">显示图元</div>
      <div className="pl-[8px] whitespace-nowrap overflow-hidden">显示名称</div>
    </div>
    {rows.map((r, i) => (
      <div key={i} className="relative grid grid-cols-[130px_63px_1fr] h-[21px] ml-[3px] border-b border-[#d4d4d4]">
        <div className="relative border-r border-[#d4d4d4] flex items-center">
          {r.l === 0 ? <span className="ml-[1px] flex items-center"><Minus /><span className="ml-[6px]">{r.t}</span></span> : null}
          {r.l === 1 ? <span className="ml-[11px] flex items-center"><Minus /><span className="ml-[6px]">{r.t}</span></span> : null}
          {r.l === 2 ? <span className="flex items-center ml-[18px]"><span className="w-[16px] h-[1px] bg-[#d8d8d8]" /><span className="ml-[6px]">{r.t}</span></span> : null}
        </div>
        <div className="border-r border-[#d4d4d4] flex items-center justify-center"><Box s={r.s} /></div>
        <div className="flex items-center pl-[25px]"><span className="w-[14px] h-[14px] border border-[#8a8a8a] rounded-[3px] shrink-0" /></div>
      </div>
    ))}
  </div>
);

const Tooltip = () => (
  <div className="absolute left-[1461px] top-[98px] w-[183px] h-[101px] bg-white border border-[#9a9da1] shadow-[1px_1px_2px_rgba(0,0,0,0.25)] px-[7px] text-[#1c1c1c]">
    <div className="h-[14px] mt-[7px] leading-[14px] font-bold whitespace-nowrap">生成侧面筋(CM)</div>
    <div className="h-[14px] mt-[7px] leading-[14px] whitespace-nowrap">批量布置侧面钢筋</div>
    <div className="h-[1px] mt-[8px] bg-[#d0d0d0]" />
    <div className="mt-[8px] leading-[17px] font-bold">适用构件：梁、主助梁、次助梁、基础梁</div>
  </div>
);

const Splitter = ({ arrow }: { arrow: string }) => (
  <div className="w-[5px] shrink-0 bg-[#f3f3f3] pt-[373px]">
    <div className="h-[100px] bg-[#6b7078] flex items-center justify-center text-[6px] text-[#c8c8c8] overflow-hidden">{arrow}</div>
  </div>
);

export default function App() {
  return (
    <div className="relative w-[1856px] h-[638px] overflow-hidden bg-white text-[12px] leading-none font-['Noto_Sans','Noto_Sans_CJK_SC',sans-serif]">
      <Ribbon />
      <ComboBar />
      <div className="h-[512px] flex bg-[#f0f0f0]">
        <NavPanel />
        <div className="w-[4px] shrink-0" />
        <ListPanel />
        <Splitter arrow="◀" />
        <Canvas />
        <Splitter arrow="▶" />
        <RightPanel />
      </div>
      <Tooltip />
      <svg viewBox="0 0 1856 638" className="absolute inset-0 w-[1856px] h-[638px] pointer-events-none">
        <polygon points="1492,26 1477,42 1480,43 1353,328 1486,50 1489,53" fill="#f44a4a" />
      </svg>
    </div>
  );
}
